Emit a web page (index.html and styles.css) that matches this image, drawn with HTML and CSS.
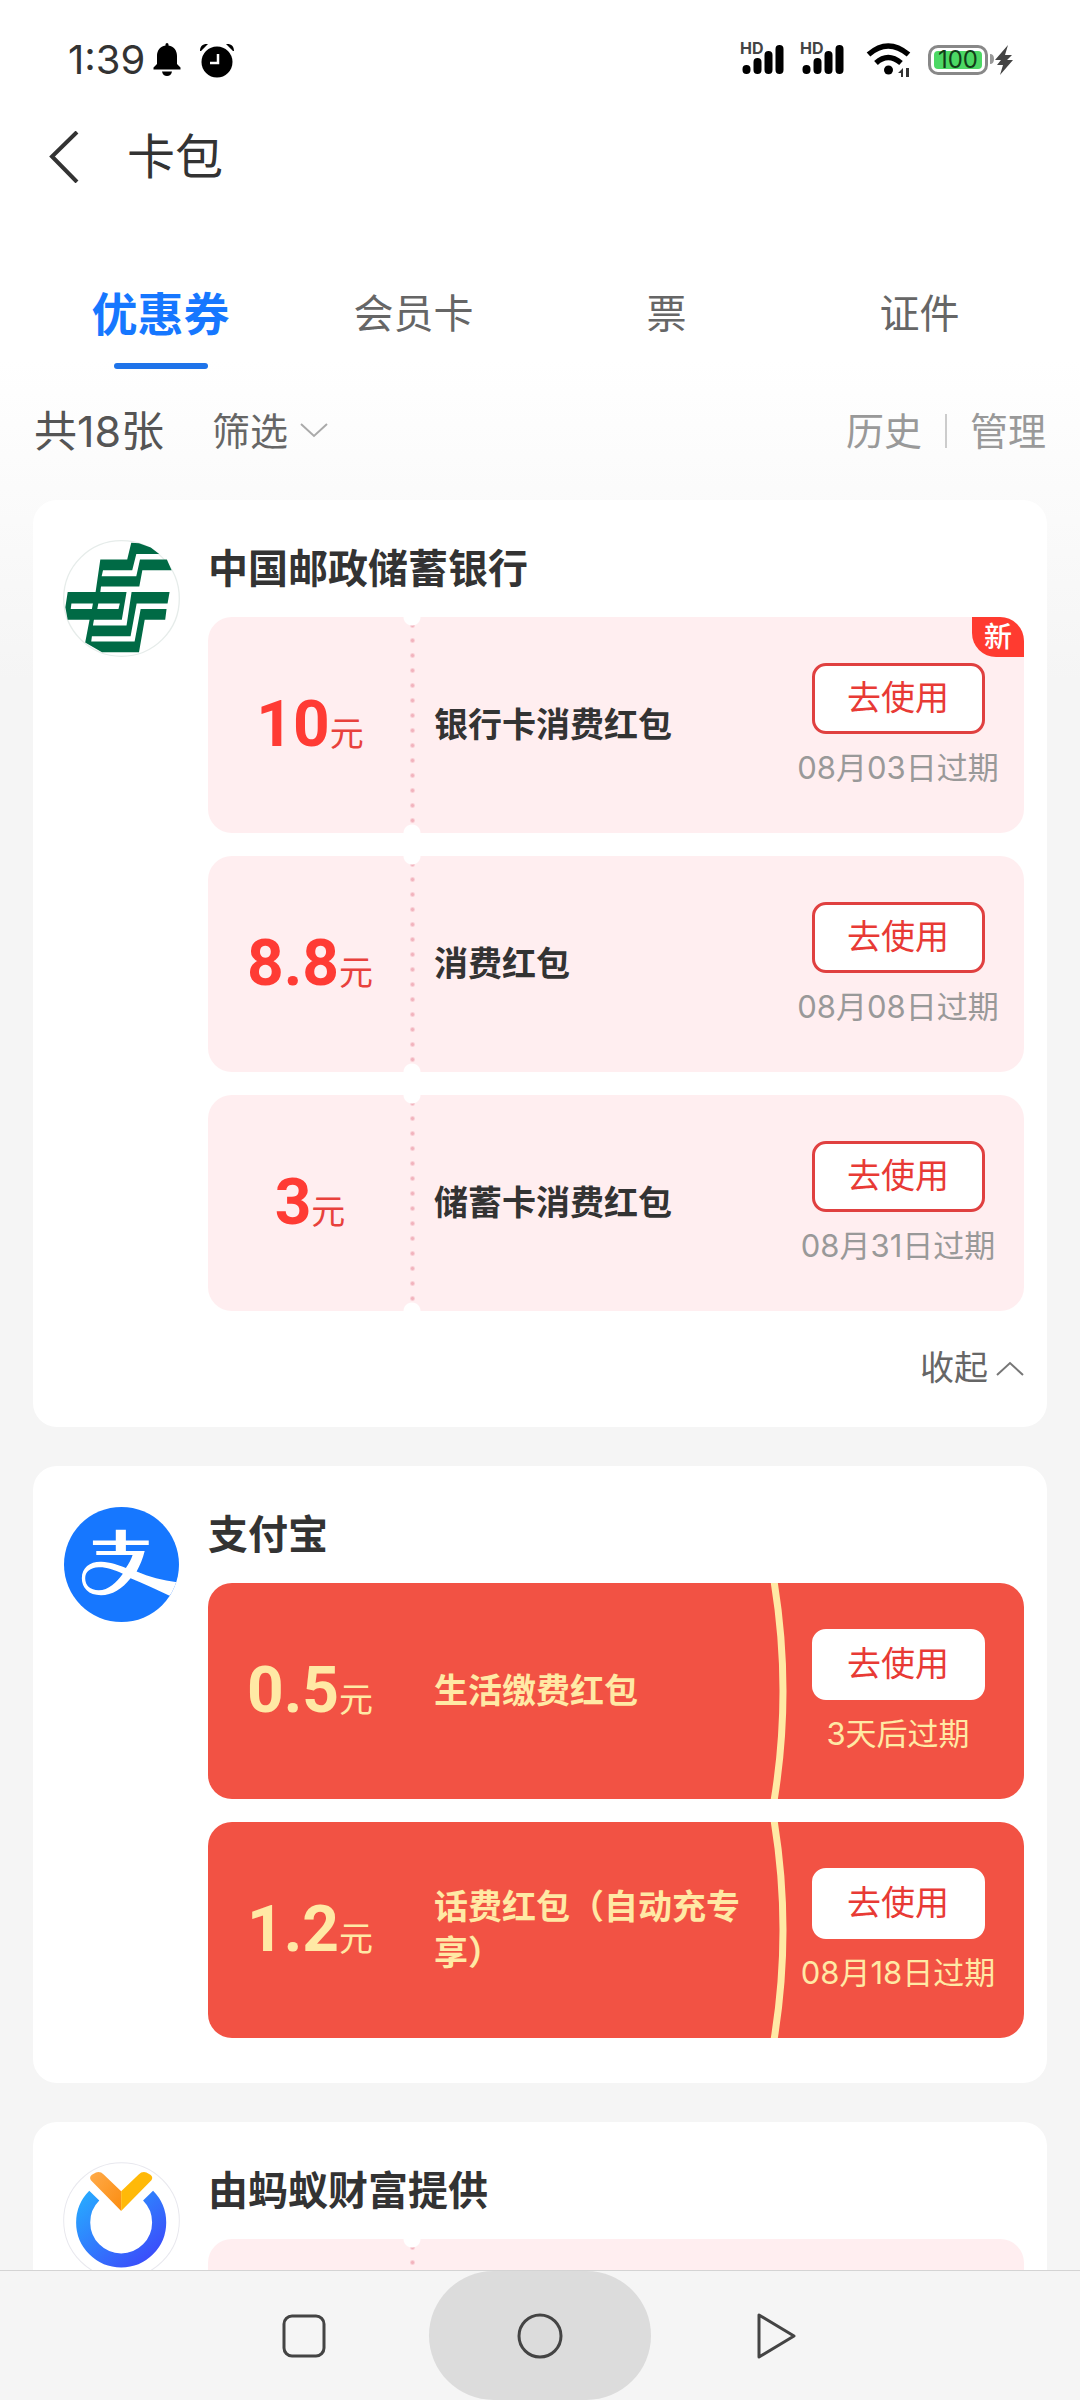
FILE: index.html
```html
<!DOCTYPE html>
<html lang="zh-CN">
<head>
<meta charset="utf-8">
<meta name="viewport" content="width=device-width, initial-scale=1">
<title>卡包</title>
<link rel="stylesheet" href="styles.css">
</head>
<body>
<div class="screen">
  <div class="status">
    <div class="status-side">
      <span class="clock">1:39</span>
      <svg class="bell" width="28" height="34" viewBox="0 0 28 34"><path d="M12.500 1.500a1.500 1.500 0 0 1 3 0v1C21 3.500 24 7.500 24 13v8l3.500 3.500v2H.5v-2L4 21v-8C4 7.500 7 3.500 12.500 2.500zM9 28.500h10c-.5 3-2.500 4.500-5 4.500s-4.500-1.500-5-4.500z"/></svg>
      <svg width="36" height="35" viewBox="0 0 36 35"><circle cx="18" cy="19" r="15.500"/><path d="M1 8C1 3 4 .5 9 1L2 8zM35 8c0-5-3-7.500-8-7l7 7z"/><path d="M19 11v9h-8" fill="none" stroke="#fff" stroke-width="2.500"/></svg>
    </div>
    <div class="status-side">
      <span class="signal"><span class="hd">HD</span><svg width="46" height="34" viewBox="0 0 46 34"><g stroke="#000" stroke-width="8" stroke-linecap="round"><path d="M6.500 26v1M17.500 19v8M28.500 12v15M39.500 6v21"/></g></svg></span>
      <span class="signal"><span class="hd">HD</span><svg width="46" height="34" viewBox="0 0 46 34"><g stroke="#000" stroke-width="8" stroke-linecap="round"><path d="M6.500 26v1M17.500 19v8M28.500 12v15M39.500 6v21"/></g></svg></span>
      <svg class="wifi" width="48" height="34" viewBox="0 0 48 34"><g fill="none" stroke="#000" stroke-width="5.500"><path d="M2.500 11.500Q22-5.500 42.500 11.500M10 20Q22 9 35 20"/></g><circle cx="22.500" cy="27" r="4.500"/><path d="M32 30l5-5v9h-2v-4zM47 29l-4-4v9h-3v-9h3z" fill="#333"/></svg>
      <span class="battery"><span class="level">100</span></span>
      <svg class="bolt" width="24" height="32" viewBox="0 0 24 32"><path d="M0 10q4 0 4 5t-4 5z" fill="#999"/><path d="M18 1L5 16h6l-4 5h6l-3 10 13-15h-6l5-5h-7z" fill="#444"/></svg>
    </div>
  </div>

  <header class="header">
    <button class="back" aria-label="返回"><svg width="32" height="52" viewBox="0 0 32 52"><path d="M29 1L4 25.500 29 51" fill="none" stroke="#333" stroke-width="4"/></svg></button>
    <h1>卡包</h1>
  </header>

  <nav class="tabs">
    <button class="tab active">优惠券</button>
    <button class="tab">会员卡</button>
    <button class="tab">票</button>
    <button class="tab">证件</button>
  </nav>

  <div class="toolbar">
    <span class="count">共18张</span>
    <button class="filter">筛选<svg width="28" height="16" viewBox="0 0 28 16"><path d="M1 1l13 12L27 1" fill="none" stroke="#aaa" stroke-width="2"/></svg></button>
    <div class="links"><a href="#history">历史</a><span class="rule"></span><a href="#manage">管理</a></div>
  </div>

  <main class="list">
    <section class="card">
      <svg class="logo" viewBox="99 150 348 348"><circle cx="273" cy="324" r="172" fill="#fff" stroke="#e6ecea" stroke-width="4"/><path fill="#006a45" d="M302 158L325 160 360 172 385 192H317L305 240H218L214 258H317L328 208H408L422 240H335L326 288H212L210 305H288L274 387H191L188 404H288L303 305H416L410 339H318L300 436H185L183 452H312L330 355H407L403 387H342L325 484H215L165 455 178 387H113L106 350 113 305H196L210 208H290z"/><path fill="#fff" d="M124 339H188L185 355H122zM204 339H268L264 355H201z"/></svg>
      <div class="body">
        <h2>中国邮政储蓄银行</h2>
        <div class="coupons">
          <article class="coupon pink">
            <div class="amount"><b>10</b>元</div>
            <h3>银行卡消费红包</h3>
            <div class="action"><button class="use">去使用</button><span class="expiry">08月03日过期</span></div>
            <span class="badge">新</span>
          </article>
          <article class="coupon pink">
            <div class="amount"><b>8.8</b>元</div>
            <h3>消费红包</h3>
            <div class="action"><button class="use">去使用</button><span class="expiry">08月08日过期</span></div>
          </article>
          <article class="coupon pink">
            <div class="amount"><b>3</b>元</div>
            <h3>储蓄卡消费红包</h3>
            <div class="action"><button class="use">去使用</button><span class="expiry">08月31日过期</span></div>
          </article>
        </div>
        <button class="collapse">收起<svg width="28" height="16" viewBox="0 0 28 16"><path d="M1 15L14 3l13 12" fill="none" stroke="#777" stroke-width="2"/></svg></button>
      </div>
    </section>

    <section class="card">
      <svg class="logo" viewBox="99 661 348 325" preserveAspectRatio="none"><defs><clipPath id="disc"><ellipse cx="273" cy="823.500" rx="171" ry="160"/></clipPath></defs><g clip-path="url(#disc)"><path fill="#1677ff" d="M99 661h348v325H99z"/><path fill="#fff" fill-rule="evenodd" d="M256 727h30v30h68v12h-68v17h56c-6 22-14 40-24 57 37 15 77 25 120 30-2 15-10 27-22 37-41-17-78-34-116-48-25 30-55 47-88 47-37 0-57-20-57-47 0-30 25-47 58-46 27 1 49 9 73 17 9-11 16-25 20-36H198v-11h58v-17h-68v-12h68zM277 849c-27-12-52-19-72-18-25 1-40 12-40 31 0 20 15 33 40 33 30 0 53-22 72-46z"/></g></svg>
      <div class="body">
        <h2>支付宝</h2>
        <div class="coupons">
          <article class="coupon red">
            <div class="amount"><b>0.5</b>元</div>
            <h3>生活缴费红包</h3>
            <div class="action"><button class="use">去使用</button><span class="expiry">3天后过期</span></div>
            <svg class="arc" viewBox="0 0 20 216" preserveAspectRatio="none"><path d="M4-2Q22 108 4 218" fill="none" stroke="#ffe9a5" stroke-width="7"/></svg>
          </article>
          <article class="coupon red">
            <div class="amount"><b>1.2</b>元</div>
            <h3>话费红包（自动充专享）</h3>
            <div class="action"><button class="use">去使用</button><span class="expiry">08月18日过期</span></div>
            <svg class="arc" viewBox="0 0 20 216" preserveAspectRatio="none"><path d="M4-2Q22 108 4 218" fill="none" stroke="#ffe9a5" stroke-width="7"/></svg>
          </article>
        </div>
      </div>
    </section>

    <section class="card">
      <svg class="logo" viewBox="99 366 348 348"><defs><linearGradient id="ring" x1="0" y1="0" x2="1" y2="1"><stop offset="0" stop-color="#28a8ff"/><stop offset="1" stop-color="#3c46fa"/></linearGradient><linearGradient id="vee" x1="0" y1="0" x2="1" y2="1"><stop offset="0" stop-color="#ffab4a"/><stop offset="1" stop-color="#fb8c10"/></linearGradient></defs><circle cx="273" cy="540" r="172" fill="#fff" stroke="#e8e8ee" stroke-width="3"/><path d="M192 466A113 113 0 1 0 352 466" fill="none" stroke="url(#ring)" stroke-width="42"/><path fill="url(#vee)" d="M182 420Q176 411 185 404L197 397Q210 393 220 403L272 453V512z"/><path fill="#ffb908" d="M362 420Q368 411 359 404L347 397Q334 393 324 403L272 453V512z"/></svg>
      <div class="body">
        <h2>由蚂蚁财富提供</h2>
        <div class="coupons">
          <article class="coupon pink"></article>
        </div>
      </div>
    </section>
  </main>

  <nav class="sysnav">
    <button aria-label="最近任务"><svg width="46" height="46" viewBox="0 0 46 46"><rect x="3" y="3" width="40" height="40" rx="8"/></svg></button>
    <button class="pressed" aria-label="主页"><svg width="46" height="46" viewBox="0 0 46 46"><circle cx="23" cy="23" r="21"/></svg></button>
    <button aria-label="后退"><svg width="46" height="46" viewBox="0 0 46 46"><path d="M6 2v42l35-21z" stroke-linejoin="round"/></svg></button>
  </nav>
</div>
</body>
</html>
```
FILE: styles.css
```css
* { box-sizing: border-box; }

body {
  margin: 0;
  font-family: Inter, "Noto Sans CJK SC", sans-serif;
  color: #333;
}

h1, h2, h3 { margin: 0; }

button {
  margin: 0;
  padding: 0;
  border: 0;
  background: none;
  font: inherit;
  color: inherit;
}

svg { display: block; flex: none; }

.screen {
  display: flex;
  flex-direction: column;
  height: 100vh;
  background: linear-gradient(#fff 360px, #f5f5f5 680px);
}

/* system status bar */
.status {
  display: flex;
  justify-content: space-between;
  height: 108px;
  padding: 12px 66px 0 68px;
}

.status-side { display: flex; align-items: center; }

.clock {
  font-size: 40px;
  line-height: 48px;
  color: #333;
}

.bell { margin: 0 18px 0 8px; }

.signal { position: relative; margin-right: 14px; }

.hd {
  position: absolute;
  left: 0;
  top: -3px;
  font-size: 16px;
  line-height: 16px;
  font-weight: 700;
  color: #444;
}

.wifi { margin: 0 14px 0 6px; }

.battery {
  width: 60px;
  height: 30px;
  padding: 3px;
  border: 3px solid #888;
  border-radius: 10px;
  background: #fff;
}

.level {
  display: block;
  border-radius: 4px;
  background: #4cd864;
  font-size: 24px;
  line-height: 18px;
  text-align: center;
  color: #123d18;
}

.bolt { margin-left: 2px; }

/* page header */
.header {
  display: flex;
  align-items: center;
  gap: 47px;
  height: 97px;
  padding-left: 48px;
}

.header h1 {
  font-size: 48px;
  line-height: 64px;
  font-weight: 400;
}

.tabs {
  display: grid;
  grid-template-columns: repeat(4, 1fr);
  margin-top: 68px;
  padding: 0 34px;
}

.tab {
  display: flex;
  flex-direction: column;
  align-items: center;
  height: 96px;
  font-size: 40px;
  line-height: 82px;
  color: #666;
}

.tab.active {
  font-size: 46px;
  font-weight: 700;
  color: #1677ff;
}

.tab.active::after {
  content: "";
  width: 94px;
  height: 6px;
  margin-top: 8px;
  border-radius: 3px;
  background: #1f74ea;
}

.toolbar {
  display: flex;
  align-items: center;
  height: 124px;
  padding: 0 34px;
  font-size: 38px;
  line-height: 48px;
}

.count { font-size: 43px; color: #555; }

.filter {
  display: flex;
  align-items: center;
  gap: 12px;
  margin-left: 48px;
  color: #666;
}

.links {
  display: flex;
  align-items: center;
  gap: 23px;
  margin-left: auto;
}

.links a { color: #999; text-decoration: none; }

.rule { width: 2px; height: 34px; background: #ccc; }

/* coupon list */
.list {
  flex: 1;
  min-height: 0;
  overflow-y: auto;
  scrollbar-width: none;
  display: flex;
  flex-direction: column;
  gap: 39px;
  padding: 7px 33px 0;
}

.card {
  flex: none;
  display: flex;
  gap: 28px;
  padding: 40px 23px 45px 30px;
  border-radius: 24px;
  background: #fff;
}

.logo { width: 117px; height: 117px; }

.body { flex: 1; min-width: 0; }

.card h2 {
  font-size: 40px;
  line-height: 58px;
  font-weight: 700;
}

.coupons {
  display: grid;
  gap: 23px;
  margin-top: 19px;
}

.coupon {
  position: relative;
  display: grid;
  grid-template-columns: 204px 1fr 252px;
  align-items: center;
  min-height: 216px;
  border-radius: 24px;
}

.coupon.pink {
  background:
    radial-gradient(circle at 204px 0, #fff 8px, transparent 9px),
    radial-gradient(circle at 204px 100%, #fff 8px, transparent 9px),
    radial-gradient(circle, #f2b3bd 1px, transparent 3px) 197px 16px / 15px 15px repeat-y,
    #ffeef0;
}

.coupon.red { background: #f25244; color: #ffe9a5; }

.amount {
  padding-top: 8px;
  font-size: 34px;
  line-height: 76px;
  text-align: center;
  color: #e8413c;
}

.amount b {
  font-family: Roboto, sans-serif;
  font-size: 64px;
  font-weight: 700;
  color: #ff3b34;
}

.red .amount, .red .amount b { color: inherit; }

.coupon h3 {
  padding: 0 16px 0 22px;
  font-size: 34px;
  line-height: 46px;
  font-weight: 700;
}

.action {
  display: flex;
  flex-direction: column;
  align-items: center;
  gap: 14px;
}

.use {
  width: 173px;
  height: 71px;
  border: 3px solid #e04040;
  border-radius: 14px;
  background: #fff;
  font-size: 34px;
  line-height: 46px;
  color: #e83a35;
}

.red .use { border-color: #fff; }

.expiry {
  font-size: 31px;
  line-height: 40px;
  color: #999;
}

.red .expiry { color: inherit; }

.badge {
  position: absolute;
  top: 0;
  right: 0;
  width: 52px;
  height: 40px;
  border-radius: 0 24px;
  background: #ff3b30;
  font-size: 28px;
  line-height: 40px;
  font-weight: 500;
  text-align: center;
  color: #fff;
}

.arc {
  position: absolute;
  top: 0;
  right: 234px;
  width: 20px;
  height: 100%;
}

.collapse {
  display: flex;
  align-items: center;
  gap: 8px;
  margin: 34px 0 -9px auto;
  font-size: 34px;
  line-height: 46px;
  color: #666;
}

/* system navigation */
.sysnav {
  flex: none;
  display: flex;
  justify-content: center;
  gap: 14px;
  height: 130px;
  border-top: 1px solid #d4d4d4;
  background: #f5f5f5;
}

.sysnav button {
  display: grid;
  place-items: center;
  width: 222px;
  border-radius: 65px;
}

.sysnav .pressed { background: #dcdcdc; }

.sysnav svg { fill: none; stroke: #444; stroke-width: 3; }
```
